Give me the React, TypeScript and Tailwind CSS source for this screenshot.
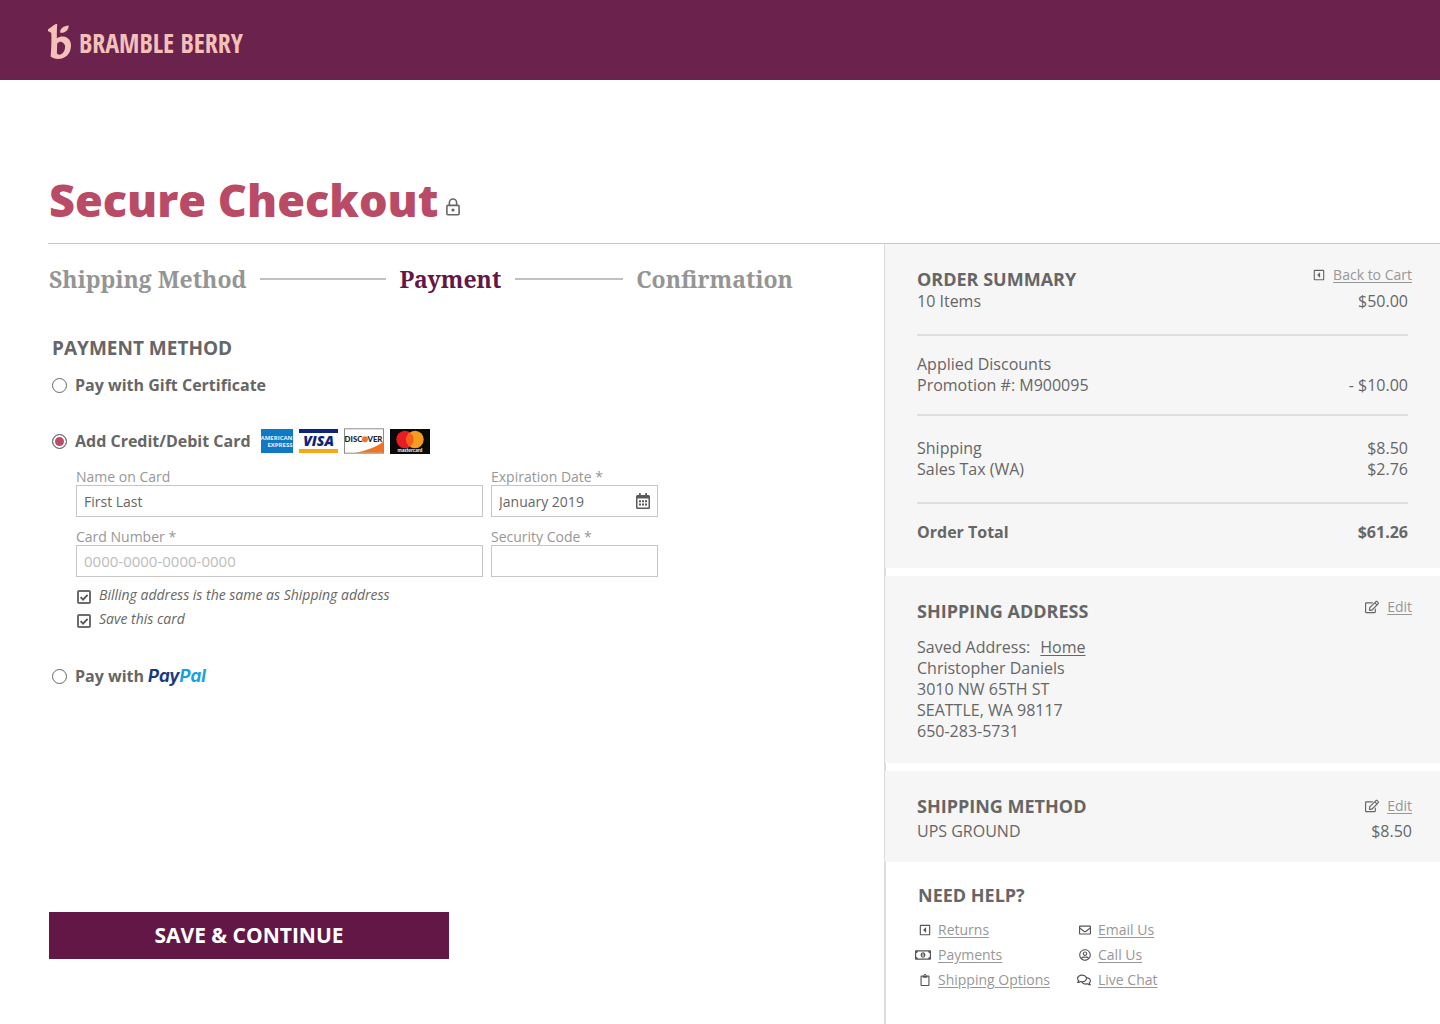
import React from 'react';
import {
  FaRegCaretSquareLeft,
  FaRegClipboard,
  FaRegComments,
  FaRegEdit,
  FaRegEnvelope,
  FaRegMoneyBillAlt,
  FaRegUserCircle,
} from 'react-icons/fa';

const sans = "font-['Open_Sans','Noto_Sans',sans-serif]";

function BrandMark() {
  return (
    <svg viewBox="54 42 70 106" className="h-[35px] w-[23px]" fill="#f4c1b8" aria-hidden="true">
      <path
        fillRule="evenodd"
        d="M54 58C63 55 70 44 78 42H82C81 56 81 72 81 86C86 82 92 80 99 80C115 81 124 92 124 107C124 131 108 148 84 148C75 148 68 146 62 141C64 118 65 90 64 70C62 67 58 65 54 64ZM82 101C87 96 92 95 97 97C104 100 107 106 106 114C104 127 97 135 89 135C85 135 82 133 81 130C81 120 82 110 82 101Z"
      />
      <path d="M91 68C90 55 101 47 117 46C117 60 106 70 91 68Z" />
    </svg>
  );
}

function LockIcon() {
  return (
    <svg viewBox="0 0 14 18" className="h-[18px] w-3.5" fill="none" stroke="#666" strokeWidth="1.6" aria-hidden="true">
      <rect x="0.9" y="7.4" width="12.2" height="9.4" rx="1" />
      <path d="M3.4 7.4V4.6a3.6 3.6 0 0 1 7.2 0V7.4" />
      <circle cx="7" cy="12" r="1.6" fill="#666" stroke="none" />
    </svg>
  );
}

function CalendarIcon() {
  return (
    <svg viewBox="0 0 14 16" className="h-4 w-3.5" fill="#5a5a5a" aria-hidden="true">
      <path
        fillRule="evenodd"
        d="M3 .4Q3 0 3.4 0H4.4Q4.8 0 4.8 .4V2H9.2V.4Q9.2 0 9.6 0H10.6Q11 0 11 .4V2H12.5Q14 2 14 3.5V14.5Q14 16 12.5 16H1.5Q0 16 0 14.5V3.5Q0 2 1.5 2H3ZM1.5 5.6V14.5H12.5V5.6Z"
      />
      <path d="M3 7.2h2v2H3zM6 7.2h2v2H6zM9 7.2h2v2H9zM3 10.4h2v2H3zM6 10.4h2v2H6zM9 10.4h2v2H9z" />
    </svg>
  );
}

function AmexLogo() {
  return (
    <svg viewBox="0 0 32 24" className="h-6 w-8" role="img" aria-label="American Express">
      <rect width="32" height="24" fill="#1079c4" />
      <g fill="#e6f2fb" fontFamily="Open Sans, sans-serif" fontWeight="700" fontSize="6">
        <text x="15.5" y="11" textAnchor="middle">AMERICAN</text>
        <text x="19" y="17.6" textAnchor="middle">EXPRESS</text>
      </g>
    </svg>
  );
}

function VisaLogo() {
  return (
    <svg viewBox="0 0 39 24" className="h-6 w-[39px]" role="img" aria-label="Visa">
      <rect width="39" height="24" fill="#fff" />
      <rect width="39" height="4" fill="#0c2577" />
      <rect y="20" width="39" height="4" fill="#f7a810" />
      <text x="19.5" y="17.2" textAnchor="middle" fill="#0c2577" fontFamily="Open Sans, sans-serif" fontWeight="800" fontStyle="italic" fontSize="14">VISA</text>
    </svg>
  );
}

function DiscoverLogo() {
  return (
    <svg viewBox="0 0 41 26" className="h-[26px] w-10" role="img" aria-label="Discover">
      <rect width="41" height="26" fill="#fff" />
      <path d="M40 14C33 19 23 23 11 25H40Z" fill="#ee7623" />
      <rect x="0.5" y="0.5" width="40" height="25" fill="none" stroke="#8a8a8a" />
      <g fill="#222" fontFamily="Lato, sans-serif" fontWeight="900" fontSize="8">
        <text x="18.8" y="14" textAnchor="end">DISC</text>
        <text x="24" y="14">VER</text>
      </g>
      <circle cx="21.5" cy="11.2" r="3" fill="#ee7623" />
    </svg>
  );
}

function MastercardLogo() {
  return (
    <svg viewBox="0 0 40 25" className="h-[25px] w-10" role="img" aria-label="Mastercard">
      <rect width="40" height="25" fill="#0a0a0a" />
      <circle cx="15" cy="10.5" r="8.7" fill="#e91c24" />
      <circle cx="25" cy="10.5" r="8.7" fill="#f59d20" />
      <path d="M20 3.4a8.7 8.7 0 0 1 0 14.2a8.7 8.7 0 0 1 0-14.2Z" fill="#f2601d" />
      <text x="20" y="23" textAnchor="middle" fill="#fff" fontFamily="Lato, sans-serif" fontWeight="700" fontSize="5">mastercard</text>
    </svg>
  );
}

function Radio({ id, checked = false }: { id: string; checked?: boolean }) {
  return (
    <input
      type="radio"
      name="payment"
      id={id}
      defaultChecked={checked}
      className="mr-2 size-[15px] shrink-0 appearance-none rounded-full border border-[#666] bg-white checked:bg-[#bb4b66] checked:shadow-[inset_0_0_0_2px_#fff]"
    />
  );
}

function Check({ id, label }: { id: string; label: string }) {
  return (
    <div className="flex items-center gap-2 leading-6">
      <span className="relative mt-1 size-3.5 shrink-0">
        <input
          id={id}
          type="checkbox"
          defaultChecked
          className="peer block size-3.5 appearance-none rounded-xs border-2 border-[#6c6c6c] bg-white"
        />
        <svg viewBox="0 0 14 14" className="pointer-events-none absolute inset-0 hidden size-3.5 peer-checked:block" fill="none" stroke="#555" strokeWidth="1.8" aria-hidden="true">
          <path d="M3.6 7.2L6 9.6L10.6 4.8" />
        </svg>
      </span>
      <label htmlFor={id} className="text-sm leading-6 italic">{label}</label>
    </div>
  );
}

const fieldClass =
  'h-8 w-full border border-[#c6c6c6] bg-white px-[7px] text-sm text-[#666] outline-none placeholder:text-[15px] placeholder:text-[#bcbcbc]';

function Field({ id, label, children }: { id: string; label: string; children: React.ReactNode }) {
  return (
    <div>
      <label htmlFor={id} className="block text-sm leading-4 text-[#979797]">{label}</label>
      <div className="relative">{children}</div>
    </div>
  );
}

const headingClass = 'text-lg leading-6 font-bold';

function Line({ label, amount }: { label: string; amount?: string }) {
  return (
    <div className="flex justify-between">
      <span>{label}</span>
      {amount && <span>{amount}</span>}
    </div>
  );
}

function EditLink() {
  return (
    <a href="#edit" className="flex items-center gap-2 text-sm leading-6 text-[#979797]">
      <FaRegEdit className="size-3.5 text-[#666]" />
      <span className="underline underline-offset-2">Edit</span>
    </a>
  );
}

const helpLinks = [
  { label: 'Returns', icon: <FaRegCaretSquareLeft className="size-3" /> },
  { label: 'Email Us', icon: <FaRegEnvelope className="size-3" /> },
  { label: 'Payments', icon: <FaRegMoneyBillAlt className="size-4" /> },
  { label: 'Call Us', icon: <FaRegUserCircle className="size-3" /> },
  { label: 'Shipping Options', icon: <FaRegClipboard className="size-3" /> },
  { label: 'Live Chat', icon: <FaRegComments className="size-3.5" /> },
];

export default function App() {
  return (
    <div className={`${sans} flex min-h-screen flex-col bg-white text-[#666]`}>
      <header className="flex h-20 items-center bg-[#6b234e] px-12">
        <a href="#home" className="flex items-center gap-2 pt-[3px]">
          <BrandMark />
          <span className="pt-0.5 font-['Open_Sans_Condensed','Roboto_Condensed',sans-serif] text-[26px] leading-8 font-bold text-[#f4c1b8]">
            BRAMBLE BERRY
          </span>
        </a>
      </header>

      <div className="ml-12 flex items-end gap-2 border-b border-[#c6c6c6] pt-[92px] pb-[15px] pl-px">
        <h1 className="text-[45px] leading-14 font-extrabold text-[#b94b66]">Secure Checkout</h1>
        <span className="pb-3">
          <LockIcon />
        </span>
      </div>

      <div className="grid grow grid-cols-[884fr_556fr]">
        <main className="pt-[19px] pb-16 pl-12">
          <ol className="flex max-w-[745px] items-center justify-between pl-px font-['Noto_Serif','Liberation_Serif',serif] text-[23px] leading-8 font-bold text-[#959595]">
            <li>Shipping Method</li>
            <li aria-hidden="true" className="h-0.5 w-[126px] bg-[#c0c0c0]" />
            <li aria-current="step" className="text-[#631746]">Payment</li>
            <li aria-hidden="true" className="h-0.5 w-[108px] bg-[#c0c0c0]" />
            <li>Confirmation</li>
          </ol>

          <form className="pl-1">
            <h2 className="mt-[41px] text-[19px] leading-6 font-bold">PAYMENT METHOD</h2>

            <div className="mt-[13px] flex items-center leading-6 font-bold">
              <Radio id="gift" />
              <label htmlFor="gift">Pay with Gift Certificate</label>
            </div>

            <div className="mt-8 flex h-6 items-center leading-6 font-bold">
              <Radio id="card" checked />
              <label htmlFor="card">Add Credit/Debit Card</label>
              <span className="ml-2.5 flex items-center gap-1.5">
                <AmexLogo />
                <VisaLogo />
                <DiscoverLogo />
                <MastercardLogo />
              </span>
            </div>

            <div className="mt-4 ml-6">
              <div className="grid max-w-[582px] grid-cols-[407fr_167fr] gap-x-2 gap-y-3">
                <Field id="name" label="Name on Card">
                  <input id="name" type="text" defaultValue="First Last" className={fieldClass} />
                </Field>
                <Field id="expiry" label="Expiration Date *">
                  <input id="expiry" type="text" defaultValue="January 2019" className={fieldClass} />
                  <span className="pointer-events-none absolute top-2 right-2">
                    <CalendarIcon />
                  </span>
                </Field>
                <Field id="number" label="Card Number *">
                  <input id="number" type="text" placeholder="0000-0000-0000-0000" className={fieldClass} />
                </Field>
                <Field id="code" label="Security Code *">
                  <input id="code" type="text" className={fieldClass} />
                </Field>
              </div>
              <div className="mt-1.5 pl-px">
                <Check id="same" label="Billing address is the same as Shipping address" />
                <Check id="save" label="Save this card" />
              </div>
            </div>

            <div className="mt-[33px] flex h-6 items-center leading-6 font-bold">
              <Radio id="paypal" />
              <label htmlFor="paypal" className="flex items-baseline gap-1">
                Pay with
                <span className="font-['Inter',sans-serif] text-[17px] leading-6 font-bold text-[#173a85] italic">
                  Pay<span className="text-[#1a9fe0]">Pal</span>
                </span>
              </label>
            </div>
          </form>

          <button type="submit" className="mt-56 ml-px h-[47px] w-[400px] bg-[#631746] text-[21px] font-bold text-white">
            SAVE &amp; CONTINUE
          </button>
        </main>

        <aside className="flex flex-col border-l border-[#dcdcdc]">
          <section className="bg-[#f6f6f6] pt-[19px] pr-8 pb-[25px] pl-8 leading-[21px]">
            <div className="-mr-1 flex items-start justify-between">
              <h2 className={`${headingClass} mt-1`}>ORDER SUMMARY</h2>
              <a href="#cart" className="flex items-center gap-2 text-sm leading-6 text-[#979797]">
                <FaRegCaretSquareLeft className="size-3 text-[#666]" />
                <span className="underline underline-offset-2">Back to Cart</span>
              </a>
            </div>
            <Line label="10 Items" amount="$50.00" />
            <div className="mt-[22px] border-t-2 border-[#dedede] pt-[18px]">
              <Line label="Applied Discounts" />
              <Line label="Promotion #: M900095" amount="- $10.00" />
            </div>
            <div className="mt-[18px] border-t-2 border-[#dedede] pt-[22px]">
              <Line label="Shipping" amount="$8.50" />
              <Line label="Sales Tax (WA)" amount="$2.76" />
            </div>
            <div className="mt-[22px] border-t-2 border-[#dedede] pt-[18px] font-bold">
              <Line label="Order Total" amount="$61.26" />
            </div>
          </section>

          <div className="h-2 border-l border-[#dcdcdc]" />

          <section className="bg-[#f6f6f6] pt-[19px] pr-7 pb-[21px] pl-8 leading-[21px]">
            <div className="flex items-start justify-between">
              <h2 className={`${headingClass} mt-1`}>SHIPPING ADDRESS</h2>
              <EditLink />
            </div>
            <address className="mt-3.5 not-italic">
              <p>
                Saved Address:
                <a href="#address" className="ml-2.5 underline underline-offset-2">Home</a>
              </p>
              <p>Christopher Daniels</p>
              <p>3010 NW 65TH ST</p>
              <p>SEATTLE, WA 98117</p>
              <p>650-283-5731</p>
            </address>
          </section>

          <div className="h-2 border-l border-[#dcdcdc]" />

          <section className="bg-[#f6f6f6] pt-[23px] pr-7 pb-5 pl-8 leading-[21px]">
            <div className="flex items-center justify-between">
              <h2 className={headingClass}>SHIPPING METHOD</h2>
              <EditLink />
            </div>
            <div className="mt-[3px]">
              <Line label="UPS GROUND" amount="$8.50" />
            </div>
          </section>

          <section className="grow border-l border-[#dcdcdc] pt-[21px] pb-8 pl-[29px]">
            <h2 className={`${headingClass} pl-[3px]`}>NEED HELP?</h2>
            <ul className="mt-2.5 grid grid-cols-[160px_1fr] text-sm leading-[25px]">
              {helpLinks.map(({ label, icon }) => (
                <li key={label}>
                  <a href="#help" className="flex items-center gap-[7px] text-[#979797]">
                    <span className="flex w-4 shrink-0 justify-end text-[#555]">{icon}</span>
                    <span className="whitespace-nowrap underline underline-offset-2">{label}</span>
                  </a>
                </li>
              ))}
            </ul>
          </section>
        </aside>
      </div>
    </div>
  );
}
